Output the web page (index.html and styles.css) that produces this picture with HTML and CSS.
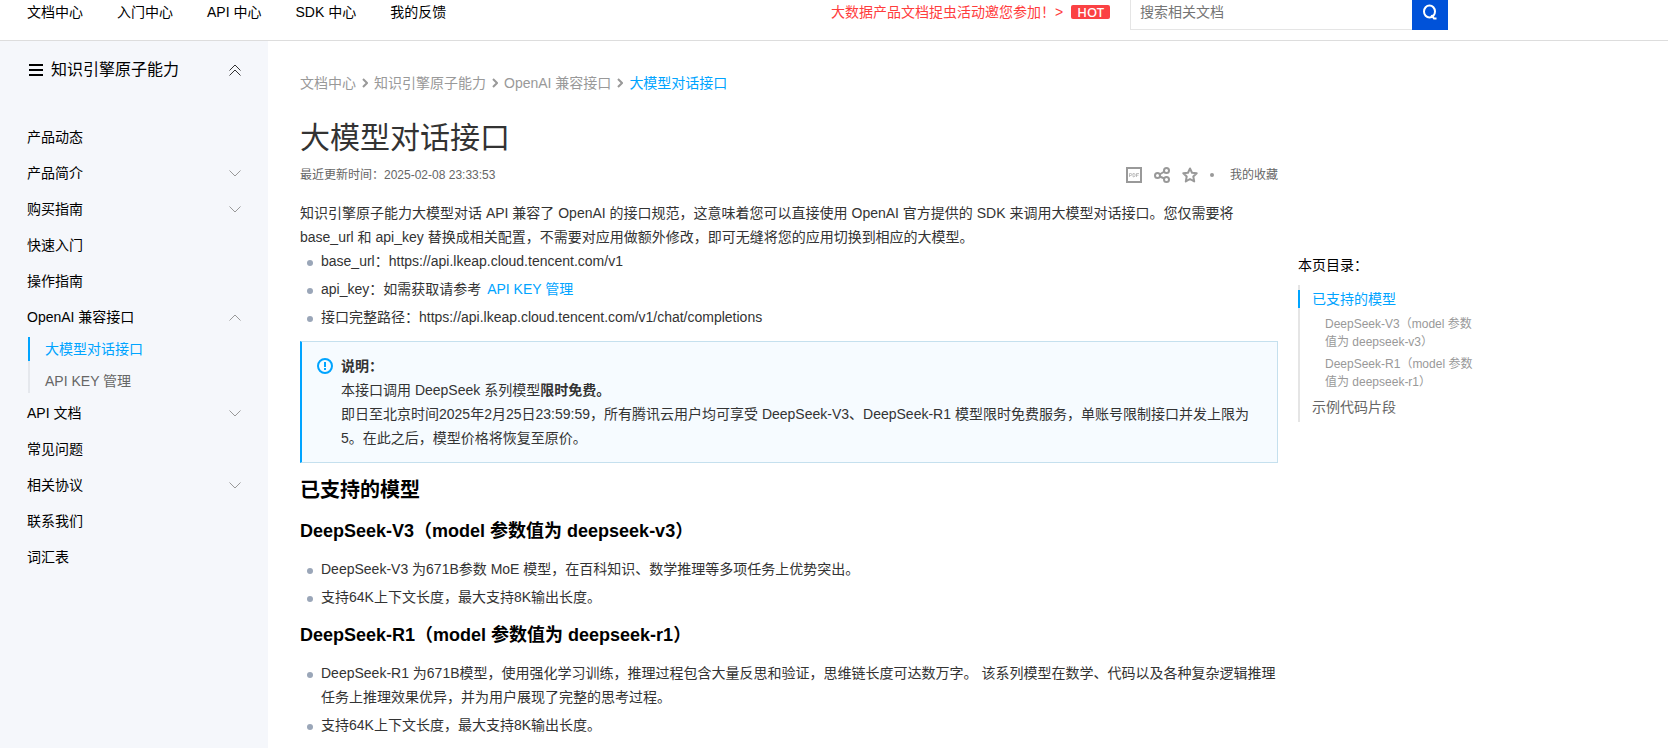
FILE: index.html
```html
<!DOCTYPE html>
<html lang="zh-CN">
<head>
<meta charset="utf-8">
<title>大模型对话接口</title>
<link rel="stylesheet" href="styles.css">
</head>
<body>
<header class="topbar">
  <div class="topbar-inner">
    <nav class="topnav">
      <a href="#">文档中心</a>
      <a href="#">入门中心</a>
      <a href="#">API 中心</a>
      <a href="#">SDK 中心</a>
      <a href="#">我的反馈</a>
    </nav>
    <a class="promo" href="#">大数据产品文档捉虫活动邀您参加！&gt;<span class="hot">HOT</span></a>
    <form class="search">
      <input class="search-input" type="text" placeholder="搜索相关文档" aria-label="搜索相关文档">
      <button class="search-button" type="button" aria-label="搜索">
        <svg width="16" height="16" viewBox="0 0 16 16" fill="none" stroke="currentColor" stroke-width="2"><ellipse cx="7.500" cy="7.500" rx="5.500" ry="6"/><path d="M9.500 11l2.500 3.500h2.500"/></svg>
      </button>
    </form>
  </div>
</header>
<div class="layout">
  <aside class="sidebar">
    <div class="sidebar-head">
      <svg class="burger" width="14" height="12" viewBox="0 0 14 12" fill="currentColor"><path d="M0 0h14v2H0zM0 5h14v2H0zM0 10h14v2H0z"/></svg>
      <span class="sidebar-title">知识引擎原子能力</span>
      <button class="collapse" type="button" aria-label="收起">
        <svg width="12" height="12" viewBox="0 0 12 12" fill="none" stroke="currentColor"><path d="M.5 6.500L6 1l5.500 5.500M.5 11.500L6 6l5.500 5.500"/></svg>
      </button>
    </div>
    <nav class="menu">
      <a class="menu-item" href="#">产品动态</a>
      <a class="menu-item" href="#">产品简介<svg class="arrow" viewBox="0 0 12 7"><path d="M.5.5L6 6 11.500.5"/></svg></a>
      <a class="menu-item" href="#">购买指南<svg class="arrow" viewBox="0 0 12 7"><path d="M.5.5L6 6 11.500.5"/></svg></a>
      <a class="menu-item" href="#">快速入门</a>
      <a class="menu-item" href="#">操作指南</a>
      <a class="menu-item" href="#">OpenAI 兼容接口<svg class="arrow" viewBox="0 0 12 7"><path d="M.5 6.500L6 1l5.500 5.500"/></svg></a>
      <div class="submenu">
        <a class="submenu-item active" href="#">大模型对话接口</a>
        <a class="submenu-item" href="#">API KEY 管理</a>
      </div>
      <a class="menu-item" href="#">API 文档<svg class="arrow" viewBox="0 0 12 7"><path d="M.5.5L6 6 11.500.5"/></svg></a>
      <a class="menu-item" href="#">常见问题</a>
      <a class="menu-item" href="#">相关协议<svg class="arrow" viewBox="0 0 12 7"><path d="M.5.5L6 6 11.500.5"/></svg></a>
      <a class="menu-item" href="#">联系我们</a>
      <a class="menu-item" href="#">词汇表</a>
    </nav>
  </aside>
  <main class="article">
    <nav class="crumbs">
      <a href="#">文档中心</a>
      <svg class="crumb-sep" viewBox="0 0 6 10"><path d="M1 1l4 4-4 4"/></svg>
      <a href="#">知识引擎原子能力</a>
      <svg class="crumb-sep" viewBox="0 0 6 10"><path d="M1 1l4 4-4 4"/></svg>
      <a href="#">OpenAI 兼容接口</a>
      <svg class="crumb-sep" viewBox="0 0 6 10"><path d="M1 1l4 4-4 4"/></svg>
      <a class="current" href="#">大模型对话接口</a>
    </nav>
    <h1>大模型对话接口</h1>
    <div class="meta">
      <span class="updated">最近更新时间：2025-02-08 23:33:53</span>
      <div class="tools">
        <button class="tool" type="button" aria-label="下载 PDF"><svg width="16" height="16" viewBox="0 0 16 16" fill="none" stroke="currentColor"><path stroke-width="2" d="M1 1h14v14H1z"/><path stroke-width=".6" d="M3.500 10V6.500h1.300q1 0 1 1t-1 1H3.500M7 6.500v3.300h.8q1.400 0 1.400-1.700T7.800 6.500zM10.500 10V6.500H13M10.500 8.200h2"/></svg></button>
        <button class="tool" type="button" aria-label="分享"><svg width="16" height="16" viewBox="0 0 16 16" fill="none" stroke="currentColor" stroke-width="2"><circle cx="3.500" cy="8.500" r="2.500"/><circle cx="12.500" cy="3.500" r="2.500"/><circle cx="12.500" cy="12.500" r="2.500"/><path d="M5.500 7.500l5-3M5.500 9.500l5 2"/></svg></button>
        <button class="tool" type="button" aria-label="收藏"><svg width="16" height="16" viewBox="0 0 16 16" fill="none" stroke="currentColor" stroke-width="2" stroke-linejoin="round"><path d="M8 1.500l2 4.200 4.700.6-3.400 3.200.9 4.900L8 12l-4.200 2.400.9-4.900L1.300 6.300 6 5.700z"/></svg></button>
        <span class="dot"></span>
        <a class="favorites" href="#">我的收藏</a>
      </div>
    </div>
    <p>知识引擎原子能力大模型对话 API 兼容了 OpenAI 的接口规范，这意味着您可以直接使用 OpenAI 官方提供的 SDK 来调用大模型对话接口。您仅需要将 base_url 和 api_key 替换成相关配置，不需要对应用做额外修改，即可无缝将您的应用切换到相应的大模型。</p>
    <ul>
      <li>base_url：https://api.lkeap.cloud.tencent.com/v1</li>
      <li>api_key：如需获取请参考 <a class="link" href="#">API KEY 管理</a></li>
      <li>接口完整路径：https://api.lkeap.cloud.tencent.com/v1/chat/completions</li>
    </ul>
    <section class="notice">
      <svg class="notice-icon" width="16" height="16" viewBox="0 0 16 16" fill="none" stroke="currentColor" stroke-width="2"><circle cx="8" cy="8" r="7"/><path d="M8 4v5M8 10v2"/></svg>
      <div class="notice-body">
        <strong>说明：</strong>
        <p>本接口调用 DeepSeek 系列模型<strong>限时免费。</strong></p>
        <p>即日至北京时间2025年2月25日23:59:59，所有腾讯云用户均可享受 DeepSeek-V3、DeepSeek-R1 模型限时免费服务，单账号限制接口并发上限为5。在此之后，模型价格将恢复至原价。</p>
      </div>
    </section>
    <h2>已支持的模型</h2>
    <h3>DeepSeek-V3（model 参数值为 deepseek-v3）</h3>
    <ul>
      <li>DeepSeek-V3 为671B参数 MoE 模型，在百科知识、数学推理等多项任务上优势突出。</li>
      <li>支持64K上下文长度，最大支持8K输出长度。</li>
    </ul>
    <h3>DeepSeek-R1（model 参数值为 deepseek-r1）</h3>
    <ul>
      <li>DeepSeek-R1 为671B模型，使用强化学习训练，推理过程包含大量反思和验证，思维链长度可达数万字。 该系列模型在数学、代码以及各种复杂逻辑推理任务上推理效果优异，并为用户展现了完整的思考过程。</li>
      <li>支持64K上下文长度，最大支持8K输出长度。</li>
    </ul>
  </main>
  <aside class="toc">
    <div class="toc-title">本页目录：</div>
    <nav class="toc-list">
      <a class="toc-item active" href="#">已支持的模型</a>
      <a class="toc-sub" href="#">DeepSeek-V3（model 参数值为 deepseek-v3）</a>
      <a class="toc-sub" href="#">DeepSeek-R1（model 参数值为 deepseek-r1）</a>
      <a class="toc-item" href="#">示例代码片段</a>
    </nav>
  </aside>
</div>
</body>
</html>
```
FILE: styles.css
```css
* { box-sizing: border-box; }
body {
  display: flex;
  flex-direction: column;
  min-height: 100vh;
  margin: 0;
  font: 14px/24px "Liberation Sans", "Noto Sans CJK SC", sans-serif;
  color: #333;
  background: #fff;
}
a { color: inherit; text-decoration: none; }
button { padding: 0; border: 0; background: none; color: inherit; cursor: pointer; }
svg { display: block; flex: none; }

.topbar { border-bottom: 1px solid #ddd; }
.topbar-inner {
  display: flex;
  align-items: flex-start;
  max-width: 1448px;
  height: 40px;
  padding-left: 27px;
}
.topnav { display: flex; gap: 34px; color: #000; white-space: nowrap; }
.promo { display: flex; align-items: center; margin-left: auto; color: #ff3d3d; white-space: nowrap; }
.hot {
  margin-left: 8px;
  padding: 0 6px;
  border-radius: 2px;
  background: #fb4143;
  color: #fff;
  font: 500 13px/14px "Noto Sans", sans-serif;
}
.search { display: flex; width: 318px; height: 30px; margin-left: 20px; }
.search-input {
  flex: 1;
  min-width: 0;
  padding: 0 9px 6px;
  border: solid #e5e5e5;
  border-width: 0 0 1px 1px;
  font: inherit;
  outline: 0;
}
.search-input::placeholder { color: #757575; }
.search-button {
  display: flex;
  justify-content: center;
  width: 36px;
  padding-top: 4px;
  background: #0052d9;
  color: #fff;
}

.layout { display: flex; flex: 1; align-items: stretch; }
.sidebar { flex: none; width: 268px; padding: 17px 27px 0; background: #f5f7fb; color: #000; }
.sidebar-head { display: flex; align-items: center; padding-left: 2px; margin-bottom: 37px; }
.sidebar-title { margin-left: 8px; font-size: 16px; }
.collapse { margin-left: auto; color: #333; }
.menu { display: flex; flex-direction: column; }
.menu-item { display: flex; align-items: center; justify-content: space-between; height: 36px; }
.arrow { width: 12px; height: 7px; fill: none; stroke: #999; }
.submenu { display: flex; flex-direction: column; padding: 2px 0 2px 1px; }
.submenu-item { padding-left: 15px; border-left: 2px solid #e5e8ed; color: #666; }
.submenu-item + .submenu-item { padding-top: 8px; }
.submenu-item.active { border-color: #00a4ff; color: #00a4ff; }

.article { flex: 0 1 978px; min-width: 0; margin-left: 32px; padding-top: 30px; }
.crumbs { display: flex; align-items: center; gap: 6px; color: #999; }
.crumb-sep { width: 6px; height: 10px; fill: none; stroke: #999; stroke-width: 2; }
.crumbs .current, .link { color: #00a4ff; }
.link { margin-left: 2px; }
h1 { margin: 23px 0 5px; font-size: 30px; line-height: 40px; font-weight: 400; }
.meta { display: flex; align-items: center; justify-content: space-between; margin-bottom: 14px; font-size: 12px; color: #666; }
.tools { display: flex; align-items: center; gap: 12px; }
.tool { color: #999; }
.dot { width: 4px; height: 4px; border-radius: 50%; background: #999; }
.favorites { margin-left: 4px; }
p { margin: 0; }
ul { display: flex; flex-direction: column; gap: 4px; margin: 0; padding: 0; list-style: none; }
li { display: flex; padding-left: 7px; white-space: pre-wrap; }
li::before { content: ""; flex: none; width: 6px; height: 6px; margin: 11px 8px 0 0; border-radius: 50%; background: #9aa6b8; }
.notice {
  display: flex;
  gap: 8px;
  margin: 12px 0;
  padding: 12px 24px 12px 15px;
  border: 1px solid #c5e0ee;
  border-left: 2px solid #00a4ff;
  background: #f6fbff;
}
.notice-icon { margin-top: 4px; color: #00a4ff; }
h2, h3 { margin: 0; color: #000; font-weight: 700; }
h2 { font-size: 20px; line-height: 30px; }
h3 { margin: 12px 0; font-size: 18px; line-height: 28px; }

.toc { width: 180px; margin-left: 20px; padding-top: 212px; }
.toc-title { margin-bottom: 8px; color: #000; }
.toc-list { display: flex; flex-direction: column; padding: 5px 0 6px; border-left: 2px solid #e5e5e5; color: #666; }
.toc-item { margin-left: -2px; padding-left: 12px; border-left: 2px solid transparent; line-height: 18px; }
.toc-item.active { margin-bottom: 7px; border-color: #00a4ff; color: #00a4ff; }
.toc-sub { margin-bottom: 4px; padding: 0 3px 0 25px; font-size: 12px; line-height: 18px; color: #999; }
.toc-sub + .toc-item { margin-top: 3px; }
```
